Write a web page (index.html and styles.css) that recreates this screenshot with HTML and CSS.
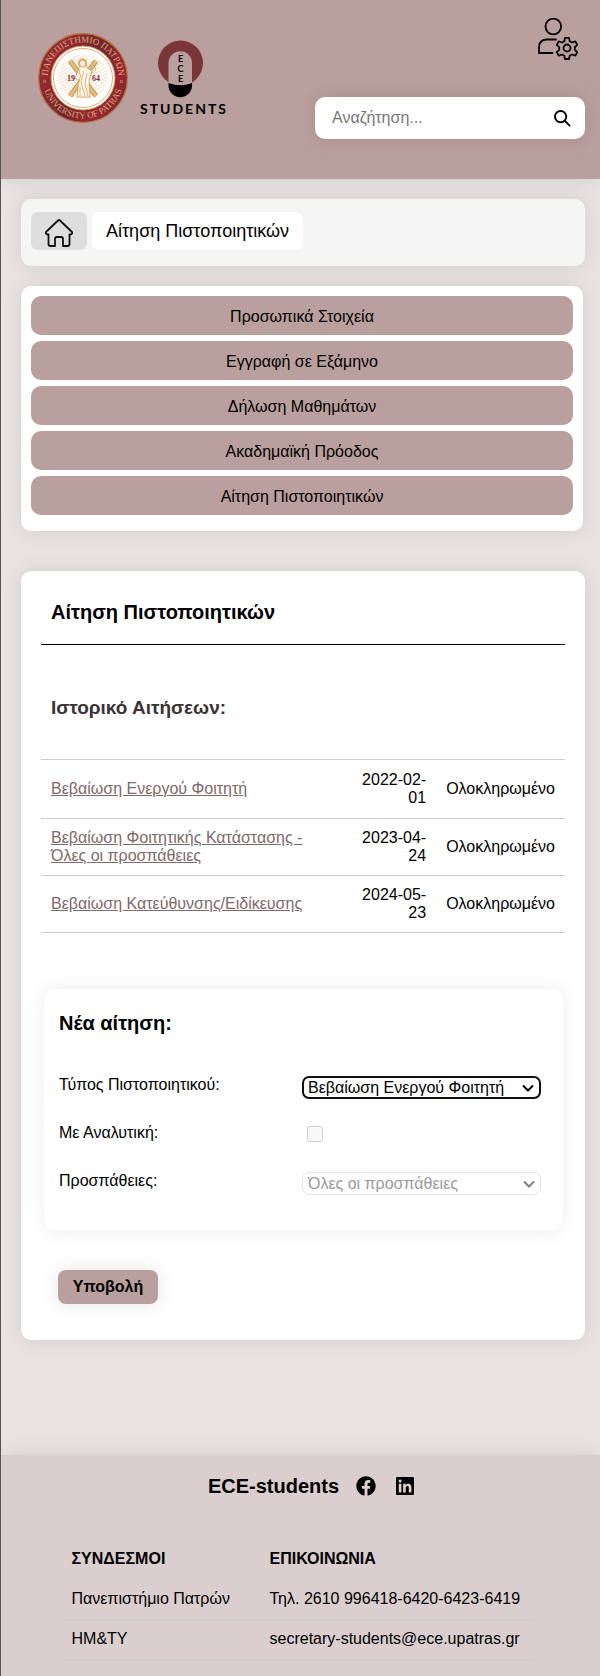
FILE: index.html
```html
<!DOCTYPE html>
<html lang="el">
<head>
<meta charset="utf-8">
<meta name="viewport" content="width=device-width, initial-scale=1">
<title>Αίτηση Πιστοποιητικών</title>
<link rel="stylesheet" href="styles.css">
</head>
<body>
<header class="header">
  <div class="logos">
    <svg class="seal" viewBox="0 0 90 90" role="img" aria-label="Πανεπιστήμιο Πατρών">
      <defs>
        <linearGradient id="ring" x1="0" y1="0.2" x2="1" y2="0.8">
          <stop offset="0" stop-color="#7d2a2e"/><stop offset="0.15" stop-color="#9a2833"/><stop offset="0.5" stop-color="#74282b"/><stop offset="0.8" stop-color="#9c2532"/><stop offset="1" stop-color="#702a2b"/>
        </linearGradient>
        <pattern id="hatch" width="3" height="3" patternUnits="userSpaceOnUse" patternTransform="rotate(60)">
          <path d="M0 0V3" stroke="#e6c28a" stroke-width="2"/>
        </pattern>
        <path id="arcTop" d="M9.500 45A35.500 35.500 0 0 1 80.500 45"/>
        <path id="arcBottom" d="M4.500 45A40.500 40.500 0 0 0 85.500 45"/>
      </defs>
      <circle cx="45" cy="45" r="44.400" fill="url(#ring)" stroke="#b5783f" stroke-width="1.200"/>
      <circle cx="45" cy="45" r="32" fill="#fff" stroke="#d29a5c"/>
      <circle cx="45" cy="45" r="29.500" fill="#fff" stroke="#dcae76" stroke-width="1"/>
      <ellipse cx="45" cy="44" rx="25" ry="23" fill="url(#hatch)" opacity="0.5"/>
      <path d="M32 28L58 63M58 28L32 63" stroke="#c8954f" stroke-width="5"/>
      <path d="M32 28L58 63M58 28L32 63" stroke="#e2bd83" stroke-width="3"/>
      <path d="M41 28q3-4 7 0l1 7 5 3-3 9 1 17h-13l2-17-4-2 4-9z" fill="#fff8e9" stroke="#c99a58" stroke-width="0.800"/>
      <circle cx="44.500" cy="30" r="4.500" fill="#d9ae70"/><ellipse cx="44.500" cy="30.500" rx="2.300" ry="3" fill="#fff0d7"/>
      <path d="M41 37q3 6 0 12M46 38l-3 11 4 14M49 40l-2 10 3 13M42 63v-9M51 37l5-5 2 5-5 4" fill="none" stroke="#cda163" stroke-width="0.800"/>
      <text class="seal-year" x="29" y="48">19</text><text class="seal-year" x="54" y="48">64</text>
      <text class="seal-text"><textPath href="#arcTop" startOffset="50%" text-anchor="middle">ΠΑΝΕΠΙΣΤΗΜΙΟ ΠΑΤΡΩΝ</textPath></text>
      <text class="seal-text"><textPath href="#arcBottom" startOffset="50%" text-anchor="middle">UNIVERSITY OF PATRAS</textPath></text>
      <circle cx="6.700" cy="48.500" r="1.200" fill="none" stroke="#d5a577" stroke-width="0.700"/>
      <circle cx="83.300" cy="48.500" r="1.200" fill="none" stroke="#d5a577" stroke-width="0.700"/>
    </svg>
    <svg class="ece" viewBox="0 0 96 76" role="img" aria-label="ECE Students">
      <circle cx="42.500" cy="23" r="22.500" fill="#7a3638"/>
      <path d="M30.500 48V23a11.700 11.700 0 0 1 23.500 0v25z" fill="#b99f9d"/>
      <path d="M30.500 43q12 4.500 23.500 0v2.500a11.700 11.700 0 0 1-23.500 0z" fill="#000"/>
      <g class="ece-letters"><text x="42.500" y="22">E</text><text x="42.500" y="32">C</text><text x="42.500" y="42">E</text></g>
      <text class="ece-name" x="2" y="73.500">STUDENTS</text>
    </svg>
  </div>
  <div class="tools">
    <a class="profile" href="#" aria-label="Ρυθμίσεις προφίλ">
      <svg viewBox="0 0 40 42" fill="none" stroke="#000" stroke-width="1.800" stroke-linejoin="round" stroke-linecap="round">
        <circle cx="15.300" cy="8.500" r="7.800"/>
        <path d="M18 21.500H8.500Q1 22 1 29.500V35H14.500"/>
        <circle cx="29" cy="30" r="3.500"/>
        <path d="M27 19.800h4l.7 3.400 2.300 1.300 3.300-1.100 2 3.500-2.500 2.300v2.600l2.500 2.300-2 3.500-3.300-1.100-2.300 1.300-.7 3.200h-4l-.7-3.200-2.300-1.300-3.300 1.100-2-3.500 2.500-2.300v-2.600l-2.500-2.300 2-3.500 3.300 1.100 2.300-1.300z"/>
      </svg>
    </a>
    <form class="search">
      <input type="search" aria-label="Αναζήτηση" placeholder="Αναζήτηση...">
      <button type="button" aria-label="Εύρεση">
        <svg viewBox="0 0 18 18" fill="none" stroke="#000" stroke-width="2"><circle cx="7" cy="7" r="6"/><path d="M11.300 11.300L17 17"/></svg>
      </button>
    </form>
  </div>
</header>

<nav class="crumbs" aria-label="Διαδρομή">
  <a class="home" href="#" aria-label="Αρχική">
    <svg viewBox="0 0 28 28" fill="none" stroke="#111" stroke-width="1.800" stroke-linejoin="round"><path d="M13 1.500Q14 .5 15 1.500L27 13q.8 2-1.500 2.500h-1V25q0 2-2 2H18v-7q0-2-2-2h-4q-2 0-2 2v7H5.500q-2 0-2-2v-9.500h-1Q.2 15 1 13z"/></svg>
  </a>
  <a class="crumb" href="#">Αίτηση Πιστοποιητικών</a>
</nav>

<nav class="menu" aria-label="Μενού">
  <a href="#">Προσωπικά Στοιχεία</a>
  <a href="#">Εγγραφή σε Εξάμηνο</a>
  <a href="#">Δήλωση Μαθημάτων</a>
  <a href="#">Ακαδημαϊκή Πρόοδος</a>
  <a href="#">Αίτηση Πιστοποιητικών</a>
</nav>

<main class="main">
  <h1>Αίτηση Πιστοποιητικών</h1>
  <h2 class="history-title">Ιστορικό Αιτήσεων:</h2>
  <table class="history">
    <tbody>
      <tr><td><a href="#">Βεβαίωση Ενεργού Φοιτητή</a></td><td class="date">2022-02-01</td><td class="status">Ολοκληρωμένο</td></tr>
      <tr><td><a href="#">Βεβαίωση Φοιτητικής Κατάστασης - Όλες οι προσπάθειες</a></td><td class="date">2023-04-24</td><td class="status">Ολοκληρωμένο</td></tr>
      <tr><td><a href="#">Βεβαίωση Κατεύθυνσης/Ειδίκευσης</a></td><td class="date">2024-05-23</td><td class="status">Ολοκληρωμένο</td></tr>
    </tbody>
  </table>
  <form>
    <section class="request">
      <h2>Νέα αίτηση:</h2>
      <div class="field">
        <label for="type">Τύπος Πιστοποιητικού:</label>
        <select id="type" class="active"><option>Βεβαίωση Ενεργού Φοιτητή</option><option>Βεβαίωση Φοιτητικής Κατάστασης</option></select>
      </div>
      <div class="field">
        <label for="detail">Με Αναλυτική:</label>
        <input id="detail" type="checkbox" disabled>
      </div>
      <div class="field">
        <label for="attempts">Προσπάθειες:</label>
        <select id="attempts" disabled><option>Όλες οι προσπάθειες</option></select>
      </div>
    </section>
    <button class="submit" type="button">Υποβολή</button>
  </form>
</main>

<footer class="footer">
  <div class="brand">
    <h2>ECE-students</h2>
    <a href="#" aria-label="Facebook"><svg class="fb" viewBox="0 0 512 512"><path d="M504 256C504 119 393 8 256 8S8 119 8 256c0 123.800 90.700 226.400 209.300 245V327.700h-63V256h63v-54.600c0-62.200 37-96.500 93.700-96.500 27.100 0 55.500 4.800 55.500 4.800v61h-31.300c-30.800 0-40.400 19.100-40.400 38.700V256h68.800l-11 71.700h-57.800V501C413.300 482.400 504 379.800 504 256z"/></svg></a>
    <a href="#" aria-label="LinkedIn"><svg class="li" viewBox="0 32 448 448"><path d="M416 32H31.900C14.300 32 0 46.500 0 64.300v383.400C0 465.500 14.300 480 31.900 480H416c17.600 0 32-14.500 32-32.300V64.300c0-17.800-14.400-32.300-32-32.300zM135.400 416H69V202.200h66.500V416zm-33.200-243c-21.300 0-38.500-17.300-38.500-38.500S80.900 96 102.200 96c21.200 0 38.500 17.300 38.500 38.500 0 21.300-17.200 38.500-38.500 38.500zm282.100 243h-66.400V312c0-24.800-.5-56.700-34.500-56.700-34.600 0-39.900 27-39.900 54.900V416h-66.400V202.200h63.700v29.200h.9c8.900-16.800 30.600-34.500 62.900-34.500 67.200 0 79.700 44.300 79.700 101.900V416z"/></svg></a>
  </div>
  <table class="links">
    <thead><tr><th>ΣΥΝΔΕΣΜΟΙ</th><th>ΕΠΙΚΟΙΝΩΝΙΑ</th></tr></thead>
    <tbody>
      <tr><td><a href="#">Πανεπιστήμιο Πατρών</a></td><td>Τηλ. 2610 996418-6420-6423-6419</td></tr>
      <tr><td><a href="#">ΗΜ&amp;ΤΥ</a></td><td>secretary-students@ece.upatras.gr</td></tr>
    </tbody>
  </table>
</footer>
</body>
</html>
```
FILE: styles.css
```css
* { box-sizing: border-box; }
html { min-height: 100%; background: #e9e3e3; }
body {
  margin: 0;
  min-height: 100vh;
  display: flex;
  flex-direction: column;
  border-left: 1px solid #555;
  background: #e9e3e3;
  color: #000;
  font: 16px/18px "Liberation Sans", Arial, sans-serif;
}
a { color: inherit; text-decoration: none; }
svg { display: block; }
h1, h2 { margin: 0; font-weight: bold; }

.header {
  display: flex;
  justify-content: space-between;
  padding: 18px 15px 40px 37px;
  background: #b99f9d;
  box-shadow: 0 0 20px rgba(0, 0, 0, .1);
}
.logos { display: flex; gap: 10px; padding-top: 15px; }
.seal { width: 90px; height: 90px; }
.seal-text { font: 9px "Liberation Serif", serif; fill: #d9a97c; }
.seal-year { font: bold 8px "Liberation Serif", serif; fill: #8b2633; }
.ece { width: 96px; height: 76px; margin-top: 7px; }
.ece-letters { font: bold 9px Lato, sans-serif; text-anchor: middle; }
.ece-name { font: bold 14px Lato, sans-serif; letter-spacing: 2px; }
.tools { display: flex; flex-direction: column; align-items: flex-end; gap: 37px; }
.profile { margin-right: 7px; }
.profile svg { width: 40px; height: 42px; }
.search {
  display: flex;
  align-items: center;
  width: 270px;
  height: 42px;
  padding: 0 14px 0 17px;
  border-radius: 10px;
  background: #fff;
  box-shadow: 0 0 20px rgba(0, 0, 0, .1);
}
.search input {
  flex: 1;
  min-width: 0;
  padding: 0;
  border: 0;
  outline: 0;
  background: none;
  font: 16px/20px "Liberation Sans", Arial, sans-serif;
}
.search input::placeholder { color: #757575; }
.search button { padding: 0; border: 0; background: none; }
.search svg { width: 17px; height: 17px; }

.crumbs, .menu, .main {
  margin-left: 20px;
  margin-right: 15px;
  border-radius: 10px;
  background: #fff;
  box-shadow: 0 0 20px rgba(0, 0, 0, .1);
}
.crumbs {
  display: flex;
  gap: 5px;
  margin-top: 20px;
  padding: 13px 10px 16px;
  background: #f5f5f5;
}
.home, .crumb { height: 38px; border-radius: 7px; background: #fff; }
.home { display: grid; place-items: center; width: 56px; padding-top: 3px; background: #dedede; }
.home svg { width: 28px; height: 28px; }
.crumb { padding: 0 14px; font-size: 18px; line-height: 38px; }

.menu {
  display: flex;
  flex-direction: column;
  gap: 6px;
  margin-top: 20px;
  margin-right: 17px;
  padding: 10px 10px 16px;
}
.menu a {
  padding: 12px 10px 10px;
  border-radius: 10px;
  background: #b99f9d;
  line-height: 17px;
  text-align: center;
}

.main { margin-top: 40px; padding: 20px 20px 36px; }
.main h1 {
  padding: 10px 10px 20px;
  border-bottom: 1px solid #000;
  font-size: 20px;
  line-height: 23px;
}
.main .history-title {
  padding: 52px 10px 40px;
  color: #3a3434;
  font-size: 19px;
  line-height: 22px;
}
.history { width: 100%; border-collapse: collapse; }
.history tr { height: 57px; border-bottom: 1px solid #ccc; }
.history tr:first-child { height: 59px; border-top: 1px solid #ccc; }
.history td { padding: 10px; }
.history .date { width: 96px; text-align: right; }
.history .status { width: 128px; }
.history a { color: #7d6a69; text-decoration: underline; }

.request {
  margin: 56px 2px 40px 3px;
  padding: 23px 22px 35px 15px;
  border-radius: 10px;
  background: #fff;
  box-shadow: 0 0 20px rgba(0, 0, 0, .07);
}
.request h2 { margin-bottom: 41px; font-size: 20px; line-height: 23px; }
.field { display: grid; grid-template-columns: 1fr 239px; align-items: start; height: 23px; }
.field + .field { margin-top: 25px; }
.field select {
  appearance: none;
  width: 100%;
  height: 23px;
  margin: 0;
  padding: 0 24px 0 5px;
  border: 1px solid #ccc;
  border-radius: 7px;
  background: #fff url("data:image/svg+xml,%3Csvg xmlns='http://www.w3.org/2000/svg' viewBox='0 0 12 8' fill='none' stroke='black' stroke-width='2'%3E%3Cpath d='M1 1.500L6 6.500L11 1.500'/%3E%3C/svg%3E") no-repeat right 5px center / 12px 8px;
  color: #000;
  font: 16px "Liberation Sans", Arial, sans-serif;
}
.field select.active { padding-left: 4px; border: 2px solid #101010; }
.field select:disabled { color: #333; opacity: .5; }
.field input { width: 16px; height: 16px; margin: 2px 5px; }
.submit {
  display: block;
  height: 34px;
  min-width: 100px;
  margin-left: 17px;
  padding: 0 13px;
  border: 0;
  border-radius: 8px;
  background: #b99f9d;
  color: #000;
  font: bold 16px "Liberation Sans", Arial, sans-serif;
  box-shadow: 0 0 20px rgba(0, 0, 0, .1);
}

.footer {
  flex: 1;
  margin-top: 115px;
  padding: 19px 22px 15px 15px;
  background: #dacfce;
  box-shadow: 0 0 20px rgba(0, 0, 0, .1);
}
.brand { display: flex; justify-content: center; align-items: center; margin-left: 28px; }
.brand h2 { font-size: 20px; line-height: 24px; }
.brand a { margin-left: 17px; }
.brand a + a { margin-left: 20px; }
.fb { width: 20px; height: 20px; }
.li { width: 18px; height: 18px; }
.links { width: 475px; max-width: 100%; margin: 41px auto 0; border-collapse: collapse; text-align: left; }
.links th, .links td { height: 40px; padding: 0 12px; }
.links th:first-child, .links td:first-child { width: 198px; }
.links tbody tr { border-bottom: 1px solid #cdcdcd; }
```
